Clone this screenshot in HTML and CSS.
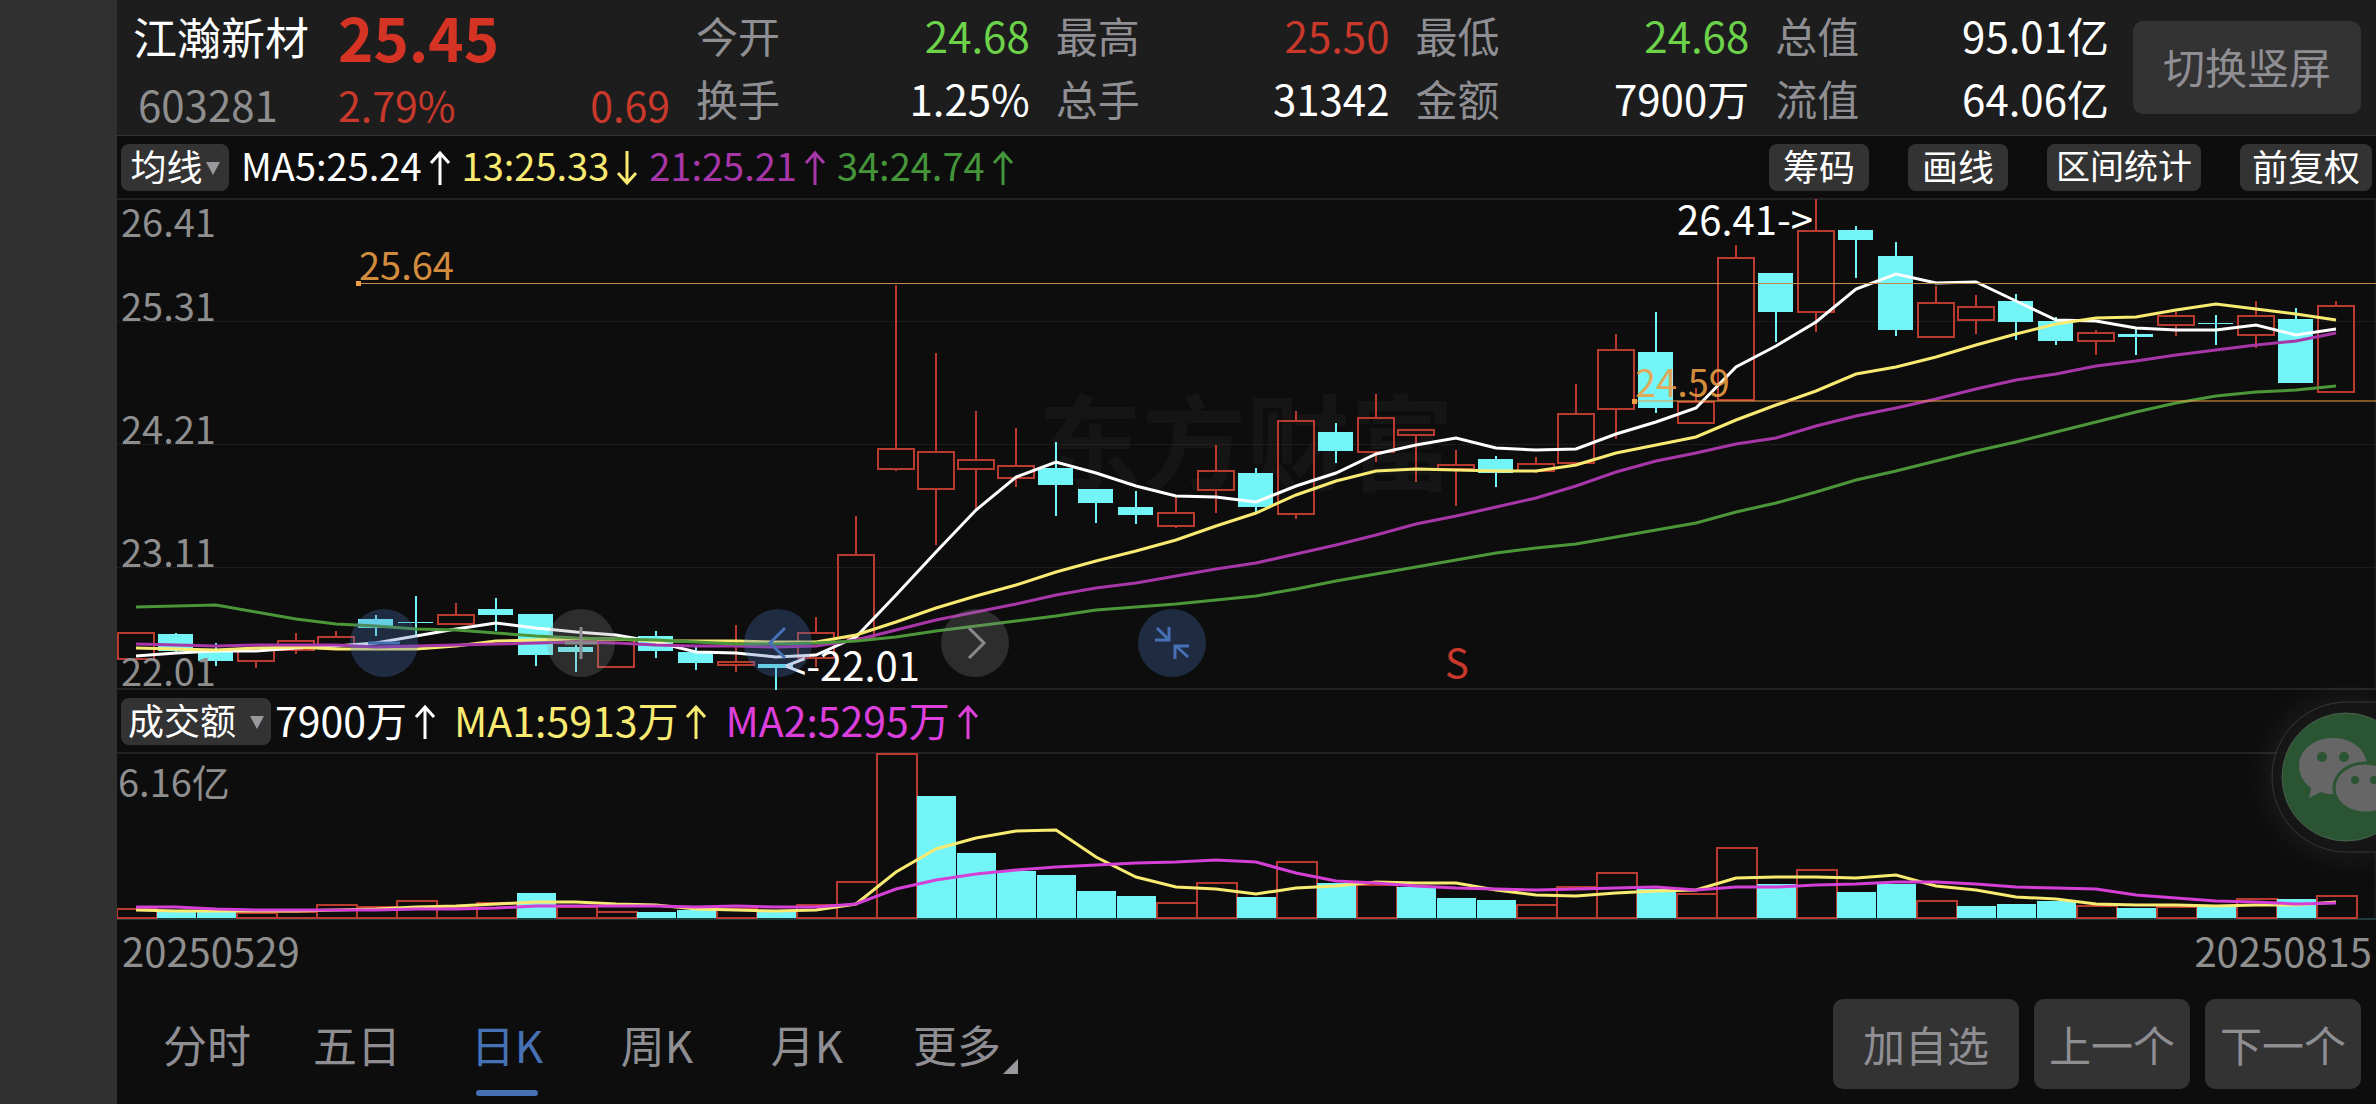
FILE: index.html
```html
<!DOCTYPE html>
<html lang="zh-CN">
<head>
<meta charset="utf-8">
<meta name="viewport" content="width=device-width, initial-scale=1">
<title>江瀚新材 603281</title>
<link rel="stylesheet" href="styles.css">
</head>
<body>
<svg class="symbols" aria-hidden="true">
  <symbol id="arrow-up" viewBox="0 0 22 36"><path d="M11 35V3M2 13L11 3L20 13" fill="none" stroke="currentColor" stroke-width="3"/></symbol>
  <symbol id="arrow-down" viewBox="0 0 22 36"><path d="M11 1V33M2 23L11 33L20 23" fill="none" stroke="currentColor" stroke-width="3"/></symbol>
</svg>
<main class="terminal">
  <header class="quote">
    <div class="stock">
      <h1 class="stock-name">江瀚新材</h1>
      <span class="stock-code">603281</span>
    </div>
    <div class="price">
      <strong class="price-now">25.45</strong>
      <div class="price-change"><span>2.79%</span><span>0.69</span></div>
    </div>
    <dl class="stats">
      <div class="stat"><dt>今开</dt><dd class="down">24.68</dd></div>
      <div class="stat"><dt>最高</dt><dd class="up">25.50</dd></div>
      <div class="stat"><dt>最低</dt><dd class="down">24.68</dd></div>
      <div class="stat"><dt>总值</dt><dd>95.01亿</dd></div>
      <div class="stat"><dt>换手</dt><dd>1.25%</dd></div>
      <div class="stat"><dt>总手</dt><dd>31342</dd></div>
      <div class="stat"><dt>金额</dt><dd>7900万</dd></div>
      <div class="stat"><dt>流值</dt><dd>64.06亿</dd></div>
    </dl>
    <button class="btn btn-rotate" type="button">切换竖屏</button>
  </header>

  <section class="bar">
    <button class="chip chip-ma" type="button">均线<i class="caret"></i></button>
    <div class="legend">
      <span class="legend-item white">MA5:25.24<svg class="arrow"><use href="#arrow-up"/></svg></span>
      <span class="legend-item yellow">13:25.33<svg class="arrow"><use href="#arrow-down"/></svg></span>
      <span class="legend-item purple">21:25.21<svg class="arrow"><use href="#arrow-up"/></svg></span>
      <span class="legend-item green">34:24.74<svg class="arrow"><use href="#arrow-up"/></svg></span>
    </div>
    <div class="tools">
      <button class="chip chip-two" type="button">筹码</button>
      <button class="chip chip-two" type="button">画线</button>
      <button class="chip chip-four" type="button">区间统计</button>
      <button class="chip chip-three" type="button">前复权</button>
    </div>
  </section>

  <section class="chart chart-price">
    <svg class="plot" id="price-plot" role="img" aria-label="日K线"></svg>
    <div class="controls">
      <button class="round blue" type="button" aria-label="缩小"><svg viewBox="0 0 68 68"><path d="M18 34H50" stroke-width="3"/></svg></button>
      <button class="round gray" type="button" aria-label="放大"><svg viewBox="0 0 68 68"><path d="M18 34H50M34 18V50" stroke-width="3"/></svg></button>
      <button class="round blue" type="button" aria-label="左移"><svg viewBox="0 0 68 68"><path d="M41 19L26 34L41 49" stroke-width="3"/></svg></button>
      <button class="round gray" type="button" aria-label="右移"><svg viewBox="0 0 68 68"><path d="M28 19L43 34L28 49" stroke-width="3"/></svg></button>
      <button class="round blue" type="button" aria-label="收起"><svg viewBox="0 0 68 68"><path d="M19 19L31 31M17 31H31V18M50 48L38 37M37 50V37H51" stroke-width="3"/></svg></button>
    </div>
  </section>

  <section class="bar">
    <button class="chip chip-volume" type="button">成交额<i class="caret"></i></button>
    <div class="legend legend-volume">
      <span class="legend-item white">7900万<svg class="arrow"><use href="#arrow-up"/></svg></span>
      <span class="legend-item yellow">MA1:5913万<svg class="arrow"><use href="#arrow-up"/></svg></span>
      <span class="legend-item magenta">MA2:5295万<svg class="arrow"><use href="#arrow-up"/></svg></span>
    </div>
  </section>

  <section class="chart chart-volume">
    <svg class="plot" id="volume-plot" role="img" aria-label="成交额"></svg>
  </section>

  <div class="dates"><time>20250529</time><time>20250815</time></div>

  <footer class="footer">
    <nav class="tabs">
      <a class="tab" href="#minute">分时</a>
      <a class="tab" href="#five-day">五日</a>
      <a class="tab active" href="#day">日K</a>
      <a class="tab" href="#week">周K</a>
      <a class="tab" href="#month">月K</a>
      <a class="tab more" href="#more">更多</a>
    </nav>
    <div class="actions">
      <button class="btn btn-add" type="button">加自选</button>
      <button class="btn btn-step" type="button">上一个</button>
      <button class="btn btn-step" type="button">下一个</button>
    </div>
  </footer>

  <button class="wechat" type="button" aria-label="微信">
    <svg viewBox="0 0 105 152">
      <path class="wechat-ring" d="M106 1H76A75 75 0 0 0 76 151H106Z"/>
      <circle cx="75" cy="76" r="64" fill="#2b5433" stroke="#48604c" stroke-width="1"/>
      <path d="M62 37C43 37 28 49 28 65C28 74 33 82 40 87L38 97L50 91C54 93 58 93 62 93C81 93 96 81 96 65C96 49 81 37 62 37Z" fill="#666"/>
      <ellipse cx="94" cy="87" rx="31" ry="25" fill="#666" stroke="#2b5433" stroke-width="3"/>
      <g fill="#2b5433"><ellipse cx="51" cy="56" rx="5" ry="5"/><ellipse cx="73" cy="56" rx="5" ry="5"/><circle cx="84" cy="79" r="4"/><circle cx="103" cy="79" r="4"/></g>
    </svg>
  </button>
</main>
<script src="chart.js"></script>
</body>
</html>
```
FILE: styles.css
```css
* { box-sizing: border-box; }

body {
  margin: 0;
  background: #0d0d0d;
  color: #fff;
  font-family: "Noto Sans CJK SC", "Noto Sans", sans-serif;
}

button {
  border: 0;
  padding: 0;
  font-family: inherit;
  cursor: pointer;
}

h1, dl, dd { margin: 0; font-weight: 400; }

.symbols { display: none; }

.terminal {
  position: relative;
  display: flex;
  flex-direction: column;
  min-height: 100vh;
  border-left: 117px solid #303030;
  overflow: hidden;
}

/* quote header */
.quote {
  display: flex;
  height: 136px;
  padding: 0 15px 0 16px;
  background: #1d1d1d;
  border-bottom: 1px solid #333;
}

.stock { width: 205px; padding-top: 1px; }
.stock-name { font-size: 44px; line-height: 70px; }
.stock-code { display: block; padding-left: 5px; font-size: 42px; line-height: 66px; color: #8e8e8e; }

.price { width: 332px; margin-right: 26px; color: #d53324; }
.price-now { display: block; font-size: 60px; font-weight: 700; line-height: 72px; }
.price-change { display: flex; justify-content: space-between; font-size: 41px; line-height: 64px; color: #c8382b; }

.stats {
  flex: 1;
  display: grid;
  grid-template-columns: repeat(4, 1fr);
  column-gap: 26px;
  align-content: start;
  margin-right: 24px;
  padding-top: 3px;
  font-size: 42px;
  line-height: 63px;
}

.stat { display: flex; justify-content: space-between; }
.stat dt { color: #8e8e93; }
.up { color: #c8382b; }
.down { color: #6bd24a; }

.btn {
  height: 90px;
  border-radius: 10px;
  background: #333;
  color: #8e8e93;
  font-size: 42px;
  line-height: 60px;
}

.btn-rotate { width: 228px; height: 93px; margin-top: 21px; padding-bottom: 4px; }

/* indicator bars */
.bar {
  display: flex;
  align-items: center;
  height: 63px;
  padding: 0 4px;
}

.chip {
  height: 47px;
  padding-bottom: 5px;
  border-radius: 8px;
  background: #333;
  color: #fff;
  font-size: 36px;
  line-height: 42px;
}

.chip-ma { width: 108px; }
.chip-volume { width: 150px; }
.chip-volume .caret { margin-left: 14px; }
.chip-two { width: 100px; }
.chip-three { width: 132px; }
.chip-four { width: 154px; font-size: 34px; }

.caret {
  display: inline-block;
  margin-left: 3px;
  border: 7px solid transparent;
  border-top: 13px solid #98989d;
  border-bottom: 0;
  vertical-align: 6px;
}

.legend { display: flex; gap: 11px; margin-left: 12px; padding-bottom: 5px; font-size: 38px; line-height: 56px; }
.legend-volume { gap: 18px; margin-left: 4px; font-size: 41px; }
.legend-item { display: flex; align-items: center; gap: 7px; }
.arrow { width: 22px; height: 36px; margin-top: 5px; }
.tools { display: flex; gap: 39px; margin-left: auto; }

.white { color: #fff; }
.yellow { color: #f9eb71; }
.purple { color: #a736a8; }
.green { color: #45953a; }
.magenta { color: #dc3fdc; }

/* charts */
.chart { position: relative; }
.chart-price { height: 491px; }
.chart-volume { height: 167px; }
.plot { display: block; width: 100%; height: 100%; overflow: visible; }
.plot text { font-size: 38px; }
.plot .axis { fill: #8e8e8e; }
.plot .note { fill: #fff; font-size: 40px; }
.plot .level { fill: #ee9f44; fill-opacity: .9; }
.plot .sell { fill: #c8382b; font-size: 40px; }
.plot .unit { fill: #8e8e8e; }
.plot .watermark { fill: #151515; font-size: 104px; font-weight: 700; }

.controls {
  position: absolute;
  left: 233px;
  top: 410px;
  display: flex;
  gap: 129px;
}

.round { width: 68px; height: 68px; border-radius: 50%; }
.round svg { display: block; fill: none; stroke: currentColor; }
.blue { background: rgba(70, 113, 185, .3); color: #4671b5; }
.gray { background: rgba(142, 142, 147, .25); color: #8a8a8e; }

.dates {
  display: flex;
  justify-content: space-between;
  padding: 0 4px 0 5px;
  font-size: 40px;
  line-height: 60px;
  color: #8e8e8e;
}

/* footer */
.footer {
  flex: 1;
  display: flex;
  justify-content: space-between;
  padding: 19px 15px 0;
}

.tabs { display: flex; height: 97px; }

.tab {
  position: relative;
  width: 150px;
  font-size: 44px;
  line-height: 90px;
  text-align: center;
  text-decoration: none;
  color: #8e8e93;
}

.tab.active { color: #4671b5; }
.tab.active::after {
  content: "";
  position: absolute;
  left: 44px;
  bottom: 0;
  width: 62px;
  height: 6px;
  border-radius: 3px;
  background: #4671b5;
}

.tab.more::after {
  content: "";
  position: absolute;
  right: 14px;
  bottom: 22px;
  border-left: 15px solid transparent;
  border-bottom: 15px solid #98989d;
}

.actions { display: flex; gap: 15px; }
.btn-add { width: 186px; }
.btn-step { width: 156px; }

.wechat {
  position: absolute;
  right: 0;
  top: 701px;
  width: 105px;
  height: 152px;
  background: none;
}
.wechat svg { display: block; width: 105px; height: 152px; overflow: visible; }
.wechat-ring { fill: #151515; fill-opacity: .8; stroke: #383838; filter: drop-shadow(0 0 16px rgba(90, 90, 90, .35)); }
```
FILE: chart.js
```js
// Each candle: [up, body top, body bottom, high, low, volume top, volume up (when it differs)]
const candles = [
  [1,633,659,633,659,909],[0,634,651,633,652,911],[0,651,661,643,666,911],[1,650,661,650,668,913],
  [1,641,650,633,654,912],[1,637,646,631,646,905],[0,619,628,615,636,907,1],[0,622,623,596,637,901,1],
  [1,615,624,603,624,908],[0,609,615,598,631,903,1],[0,614,655,614,666,893],[0,647,652,645,672,907,1],
  [1,640,667,640,667,912],[0,636,651,631,658,912],[0,652,663,647,670,910],[1,662,665,625,672,909],
  [0,664,668,664,690,910],[1,633,658,617,667,905],[1,555,638,516,638,882],[1,449,469,285,471,754],
  [1,452,489,353,545,796,0],[1,460,469,411,510,853,0],[1,466,478,428,487,871,0],[0,468,485,442,516,875],
  [0,489,503,489,523,891],[0,507,515,491,524,896],[1,513,526,497,528,903],[1,471,490,445,513,883],
  [0,473,507,468,513,897],[1,421,514,411,519,862],[0,432,451,423,463,883],[1,418,452,394,462,885],
  [1,430,435,430,482,887,0],[1,465,469,450,506,898,0],[0,459,473,456,487,900],[1,464,471,457,473,905],
  [1,414,463,384,463,887],[1,350,409,334,439,873],[0,352,408,312,413,889],[1,402,423,388,423,894],
  [1,258,400,245,400,848],[0,273,312,273,342,884],[1,231,312,199,332,870],[0,230,240,226,278,892],
  [0,256,330,242,336,884],[1,303,337,286,337,901],[1,307,320,295,334,906,0],[0,301,322,294,340,904],
  [0,321,341,317,345,901],[1,333,341,330,355,906],[0,334,337,329,355,908],[1,316,325,312,336,907],
  [0,323,324,315,345,907],[1,316,335,301,348,899],[0,319,383,308,383,899],[1,306,392,301,392,896]
];

const priceLines = [
  ['#fff', [656,653,651,651,648,646,643,636,629,623,628,632,635,642,652,653,657,655,637,595,552,510,477,462,473,486,496,497,502,486,473,454,445,438,448,450,449,434,422,408,367,346,322,289,274,283,282,301,320,321,328,330,330,325,335,329]],
  ['#f9eb71', [648,649,650,648,647,649,649,649,646,641,640,639,639,641,641,641,642,642,635,622,608,596,585,572,561,551,540,526,513,495,481,471,469,470,471,471,465,453,445,437,420,405,391,374,367,357,345,334,324,318,317,310,304,309,314,320]],
  ['#a736a8', [644,645,646,645,645,645,647,646,645,644,643,642,643,645,646,646,647,646,640,630,620,612,604,595,588,583,576,569,563,554,545,535,524,516,507,498,486,472,461,453,444,438,426,416,408,399,389,380,374,366,361,355,350,345,341,333]],
  ['#4b9639', [607,606,605,612,619,624,626,629,630,633,636,638,639,640,642,644,644,643,641,637,631,626,621,616,610,607,604,600,596,589,581,574,567,560,553,548,544,537,530,523,512,503,492,480,471,461,451,442,432,422,412,403,396,392,390,386]]
];

const volumeLines = [
  ['#f9eb71', [910,911,911,911,911,910,909,907,906,904,902,902,904,905,909,910,911,910,904,872,849,838,831,830,857,877,887,889,894,888,886,882,883,883,890,895,896,893,891,890,878,877,877,878,875,886,890,897,899,904,905,905,906,905,905,902]],
  ['#d43fd6', [907,907,909,910,910,910,910,909,909,908,906,906,906,906,907,906,907,907,904,889,880,874,870,867,865,863,862,860,862,873,881,883,886,888,889,890,889,888,887,890,887,887,885,884,882,882,884,887,888,889,895,898,901,902,904,903]]
];

const RED = '#b93b30';
const CYAN = '#73f5f7';
const BASE_WIDTH = 2259;

const line = (x1, y1, x2, y2, color, width, extra = '') =>
  `<line x1="${x1}" y1="${y1}" x2="${x2}" y2="${y2}" stroke="${color}" stroke-width="${width}" ${extra}/>`;
const label = (cls, x, y, text, anchor = 'start') =>
  `<text class="${cls}" x="${x}" y="${y}" text-anchor="${anchor}">${text}</text>`;

function draw(id, top, render) {
  const svg = document.getElementById(id);
  const width = svg.clientWidth;
  const scale = width / BASE_WIDTH;
  svg.innerHTML = `<g transform="translate(0 ${-top})">${render(width, scale)}</g>`;
}

const center = (i, s) => Math.round((19 + 40 * i) * s);
const curves = (lines, s) => lines.map(([color, ys]) =>
  `<polyline fill="none" stroke="${color}" stroke-width="3" points="${ys.map((y, i) => center(i, s) + ',' + y).join(' ')}"/>`).join('');

function pricePlot(w, s) {
  let out = label('watermark', 1129 * s, 483, '东方财富', 'middle');
  out += line(0, 199, w, 199, '#242424', 2) + line(0, 689, w, 689, '#242424', 2) + line(w - 1, 199, w - 1, 689, '#242424', 1);
  for (const y of [321, 444, 567]) out += line(0, y + 0.5, w, y + 0.5, '#2b2b2b', 1, 'stroke-dasharray="1 1"');
  candles.forEach(([up, a, b, hi, lo], i) => {
    const x = center(i, s);
    const half = Math.round(18 * s);
    if (up) {
      out += line(x, hi, x, a, RED, 2) + line(x, b, x, lo, RED, 2);
      out += `<rect x="${x - half}" y="${a}" width="${2 * half}" height="${b - a}" fill="none" stroke="${RED}" stroke-width="2"/>`;
    } else {
      out += line(x, hi, x, lo, CYAN, 2);
      out += `<rect x="${x - half}" y="${a}" width="${2 * half - 1}" height="${b - a}" fill="${CYAN}"/>`;
    }
  });
  out += curves(priceLines, s);
  out += line(241 * s, 283.5, w, 283.5, '#c08a50', 1) + line(1517 * s, 401, w, 401, '#ee9f44', 2, 'opacity=".5"');
  out += `<rect x="${239 * s}" y="281" width="5" height="5" fill="#ee9f44"/><rect x="${1515 * s}" y="399" width="5" height="5" fill="#ee9f44"/>`;
  out += label('level', 242 * s, 280, '25.64') + label('level', 1518 * s, 397, '24.59');
  [['26.41', 237], ['25.31', 321], ['24.21', 444], ['23.11', 567], ['22.01', 686]].forEach(([t, y]) => { out += label('axis', 4, y, t); });
  out += label('note', 1696 * s, 235, '26.41-&gt;', 'end') + label('note', 803 * s, 681, '&lt;-22.01', 'end');
  out += label('sell', 1328 * s, 678, 'S');
  return out;
}

function volumePlot(w, s) {
  let out = line(0, 753, w, 753, '#242424', 2) + line(0, 919, w, 919, '#1f3a3a', 2) + line(w - 1, 753, w - 1, 919, '#242424', 1);
  candles.forEach(([up, , , , , top, override], i) => {
    const x = center(i, s);
    const half = Math.round(20 * s);
    const rising = override === undefined ? up : override;
    out += rising
      ? `<rect x="${x - half + 1}" y="${top}" width="${2 * half}" height="${918 - top}" fill="none" stroke="${RED}" stroke-width="2"/>`
      : `<rect x="${x - half + 1}" y="${top}" width="${2 * half - 1}" height="${918 - top}" fill="${CYAN}"/>`;
  });
  return out + curves(volumeLines, s) + label('unit', 1, 797, '6.16亿');
}

function render() {
  draw('price-plot', 199, pricePlot);
  draw('volume-plot', 753, volumePlot);
}

render();
window.addEventListener('resize', render);
```
